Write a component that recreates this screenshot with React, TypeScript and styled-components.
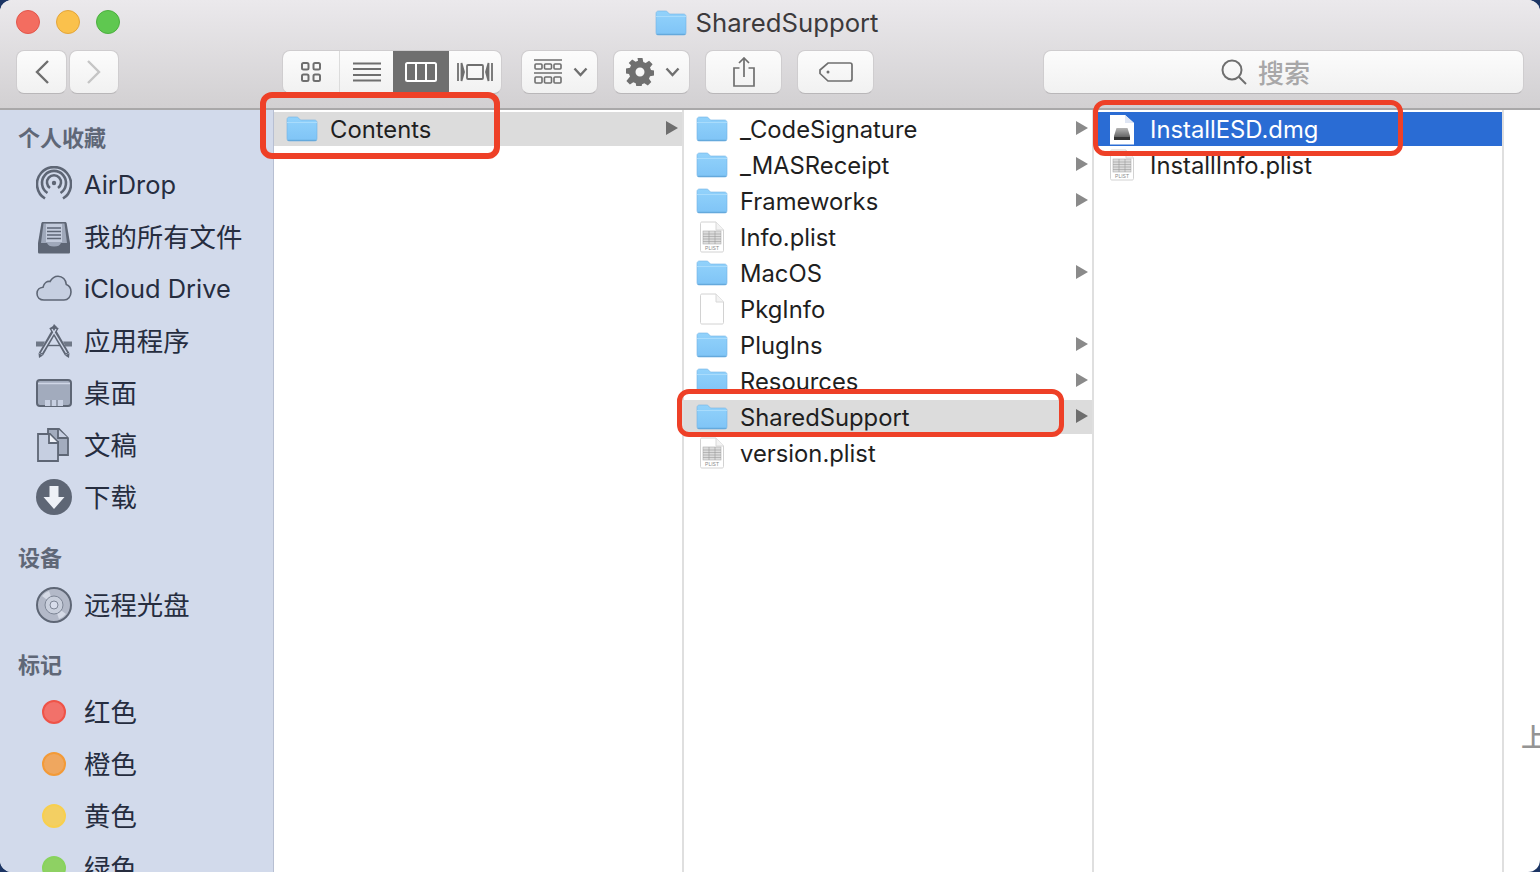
import React from 'react';
import styled, { createGlobalStyle } from 'styled-components';

const Global = createGlobalStyle`
  html, body { margin: 0; padding: 0; background: #1c3564; overflow: hidden; }
  body { font-family: Inter, "Noto Sans CJK SC", sans-serif; }
`;

const Win = styled.div`
  position: relative;
  width: 1540px;
  height: 872px;
  border-radius: 12px;
  overflow: hidden;
  display: flex;
  flex-direction: column;
  background: #fff;
`;
const Header = styled.header`
  height: 108px;
  flex: none;
  background: linear-gradient(#ebe9ec, #d2d0d2);
  border-bottom: 2px solid #a9a8a9;
  display: flex;
  flex-direction: column;
`;
const TitleBar = styled.div`
  height: 50px;
  flex: none;
  display: flex;
  align-items: center;
  padding-left: 16px;
`;
const Lights = styled.div`
  display: flex;
  gap: 16px;
  margin-top: -6px;
`;
const Light = styled.span<{ $c: string; $b: string }>`
  width: 24px;
  height: 24px;
  box-sizing: border-box;
  border-radius: 50%;
  background: ${p => p.$c};
  border: 1px solid ${p => p.$b};
`;
const Title = styled.div`
  flex: 1;
  display: flex;
  justify-content: center;
  align-items: center;
  gap: 8px;
  margin-top: -5px;
  padding-right: 126px;
  font-size: 25.7px;
  color: #3c3a3c;
`;
const Toolbar = styled.div`
  display: flex;
  align-items: flex-start;
  padding-left: 16px;
`;
const Btn = styled.div<{ $w: number; $ml?: number }>`
  width: ${p => p.$w}px;
  height: 44px;
  margin-left: ${p => p.$ml ?? 0}px;
  flex: none;
  box-sizing: border-box;
  display: flex;
  align-items: center;
  justify-content: center;
  gap: 11px;
  background: linear-gradient(#fcfcfc, #f1f1f1);
  border: 1px solid #cfcdcf;
  border-bottom-color: #b9b7b9;
  border-radius: 8px;
`;
const MenuBtn = styled(Btn)`
  padding-left: 2px;
`;
const Seg = styled.div`
  margin-left: 163px;
  width: 220px;
  height: 44px;
  flex: none;
  display: flex;
  box-sizing: border-box;
  background: linear-gradient(#fcfcfc, #f1f1f1);
  border: 1px solid #cfcdcf;
  border-bottom-color: #b9b7b9;
  border-radius: 8px;
  overflow: hidden;
`;
const SegItem = styled.div<{ $w: number; $on?: boolean; $line?: boolean }>`
  width: ${p => p.$w}px;
  flex: none;
  box-sizing: border-box;
  display: flex;
  align-items: center;
  justify-content: center;
  background: ${p => (p.$on ? '#6f6f6f' : 'transparent')};
  border-right: ${p => (p.$line ? '1px solid #dcdcdc' : 'none')};
  margin-top: ${p => (p.$on ? '-1px' : '0')};
  margin-bottom: ${p => (p.$on ? '-1px' : '0')};
`;
const Search = styled(Btn)`
  padding-right: 36px;
  font-size: 26px;
  font-weight: 500;
  color: #a8a7a8;
`;
const SearchLabel = styled.span`
  font-family: "Noto Sans CJK SC", sans-serif;
  line-height: 1;
`;
const Body = styled.div`
  flex: 1;
  display: flex;
  min-height: 0;
`;
const Side = styled.aside`
  width: 274px;
  flex: none;
  box-sizing: border-box;
  background: #d2daeb;
  border-right: 1px solid #b7bfd2;
  padding-top: 7px;
  overflow: hidden;
`;
const Heading = styled.div`
  height: 42px;
  line-height: 38px;
  padding-left: 18px;
  font-family: "Noto Sans CJK SC", sans-serif;
  font-size: 22px;
  font-weight: 700;
  color: #5f6777;
`;
const Group = styled.div<{ $gap: number }>`
  margin-bottom: ${p => p.$gap}px;
`;
const SideRow = styled.div`
  height: 52px;
  display: flex;
  align-items: center;
  font-size: 25.4px;
  color: #262d3f;
`;
const LatinLabel = styled.span`
  margin-top: -2px;
`;
const CjkLabel = styled.span`
  font-family: "Noto Sans CJK SC", sans-serif;
  font-size: 26.4px;
  line-height: 1;
  margin-top: -1px;
`;
const SideIcon = styled.span<{ $up?: number }>`
  width: 84px;
  padding-left: 36px;
  box-sizing: border-box;
  flex: none;
  display: flex;
  align-items: center;
  margin-top: ${p => -(p.$up ?? 0)}px;
`;
const TagDot = styled.span<{ $c: string; $b: string }>`
  width: 24px;
  height: 24px;
  margin-left: 6px;
  box-sizing: border-box;
  border-radius: 50%;
  background: ${p => p.$c};
  border: 2px solid ${p => p.$b};
`;
const Col = styled.section`
  width: 410px;
  flex: none;
  box-sizing: border-box;
  border-right: 2px solid #dfdfdf;
  padding-top: 1px;
`;
const LastCol = styled.section`
  flex: 1;
  position: relative;
`;
const Row = styled.div<{ $state?: 'grey' | 'blue' }>`
  height: 36px;
  box-sizing: border-box;
  padding-top: 1px;
  display: flex;
  align-items: center;
  font-size: 23.8px;
  white-space: nowrap;
  color: ${p => (p.$state === 'blue' ? '#fff' : '#1f1f1f')};
  background: ${p =>
    p.$state === 'blue' ? '#2a6cd4' : p.$state === 'grey' ? '#dcdcdc' : 'transparent'};
  background-clip: padding-box;
  border-top: 1px solid ${p => (p.$state ? '#fff' : 'transparent')};
  border-bottom: 1px solid ${p => (p.$state ? '#fff' : 'transparent')};
`;
const RowIcon = styled.span`
  width: 56px;
  flex: none;
  display: flex;
  justify-content: center;
  margin-top: -1px;
`;
const Name = styled.span`
  flex: 1;
`;
const Arrow = styled.span<{ $dark?: boolean }>`
  width: 0;
  height: 0;
  margin-right: 4px;
  border-left: 12px solid ${p => (p.$dark ? '#6e6e6e' : '#8a8a8a')};
  border-top: 7px solid transparent;
  border-bottom: 7px solid transparent;
  margin-top: -3px;
`;
const Mark = styled.div<{ $x: number; $y: number; $w: number; $h: number; $b: number }>`
  position: absolute;
  left: ${p => p.$x}px;
  top: ${p => p.$y}px;
  width: ${p => p.$w}px;
  height: ${p => p.$h}px;
  box-sizing: border-box;
  border: ${p => p.$b}px solid #ee4027;
  border-radius: 12px;
`;
const Stray = styled.span`
  position: absolute;
  left: 17px;
  top: 607px;
  font-size: 26px;
  font-weight: 500;
  color: #949494;
  font-family: "Noto Sans CJK SC", sans-serif;
`;

const Folder = () => (
  <svg width="32" height="26" viewBox="0 0 32 26">
    <defs>
      <linearGradient id="fg" x1="0" y1="0" x2="0" y2="1">
        <stop offset="0" stopColor="#92d2fb" />
        <stop offset="1" stopColor="#7fc4f6" />
      </linearGradient>
    </defs>
    <path d="M1 3.5C1 2 2 1 3.5 1h7c1 0 1.600.4 2.300 1.200L14.500 4H28.500C30 4 31 5 31 6.500v16c0 1.500-1 2.500-2.500 2.500h-25C2 25 1 24 1 22.500z" fill="url(#fg)" stroke="#74b4e4" strokeWidth=".6" />
    <path d="M1 6.500h30" stroke="#a9dcfc" strokeWidth="1" />
    <path d="M1.500 24.300h29" stroke="#5fa4d8" strokeWidth="1" />
  </svg>
);
const Doc = ({ children }: { children?: React.ReactNode }) => (
  <svg width="26" height="32" viewBox="0 0 26 32">
    <path d="M1.500 2.500C1.500 1.500 2 1 3 1h14l7.500 8v20.500c0 1-.5 1.500-1.500 1.500H3c-1 0-1.500-.5-1.500-1.500z" fill="#fff" stroke="#d2d2d2" />
    <path d="M17 1v8h7.500" fill="#f3f3f3" stroke="#d8d8d8" />
    {children}
  </svg>
);
const Plist = () => (
  <Doc>
    <rect x="4" y="10" width="18" height="13" fill="#dcdcdc" stroke="#adadad" strokeWidth=".6" />
    <path d="M4 13h18M4 15.500h18M4 18h18M4 20.500h18M10 10v13M16 10v13" stroke="#9c9c9c" strokeWidth=".6" />
    <text x="13" y="29" fontSize="5" textAnchor="middle" fill="#8a8a8a" fontFamily="Liberation Sans">PLIST</text>
  </Doc>
);
const Dmg = () => (
  <svg width="24" height="31" viewBox="0 0 24 31">
    <defs>
      <linearGradient id="dg" x1="0" y1="0" x2="0" y2="1">
        <stop offset="0" stopColor="#b5b5b5" />
        <stop offset="1" stopColor="#4a4a4a" />
      </linearGradient>
    </defs>
    <path d="M0 1h15l9 8v21.500H0z" fill="#fff" />
    <path d="M15 1v8h9" fill="#dfe6f4" />
    <path d="M6.500 14h11l2.500 8v4H4v-4z" fill="url(#dg)" />
    <rect x="4" y="23" width="16" height="3" fill="#333" />
  </svg>
);
const Ic = styled.svg<{ $c?: string }>`
  display: block;
  flex: none;
  fill: none;
  stroke: ${p => p.$c ?? '#6f6f6f'};
`;
const Chevron = () => (
  <Ic width="15" height="10" viewBox="0 0 15 10" strokeWidth="2.400"><path d="M1.500 1.500 7.500 8l6-6.500" /></Ic>
);
const S = '#5e6675';

const AirDrop = () => (
  <svg width="36" height="36" viewBox="0 0 36 36" fill="none" stroke={S} strokeWidth="2.600">
    <path d="M9 32.500A17 17 0 1 1 27 32.500" />
    <path d="M11.500 27A12 12 0 1 1 24.500 27" />
    <path d="M14 22A7 7 0 1 1 22 22" />
    <circle cx="18" cy="17" r="2.200" fill={S} stroke="none" />
  </svg>
);
const Docs = () => (
  <svg width="36" height="33" viewBox="0 0 36 33">
    <path d="M7 1h22c1 0 1.500.5 1.700 1.500L34 22v9c0 1-.5 1.500-1.500 1.500h-29C2.500 32.500 2 32 2 31v-9L5.300 2.500C5.500 1.500 6 1 7 1z" fill={S} />
    <path d="M7.500 2.500h21L31 22h-6c-1 2.500-3 3.500-7 3.500s-6-1-7-3.500H5z" fill="#9fa8ba" />
    <path d="M10 3h16v18H10z" fill="#c3cbdc" />
    <path d="M11 7h14M11 10.500h14M11 14h14M11 17.500h14" stroke={S} strokeWidth="1.500" />
  </svg>
);
const Cloud = () => (
  <svg width="36" height="26" viewBox="0 0 36 26">
    <path d="M8 25C3.500 25 1 22 1 18.500c0-3.500 2.500-6 6-6.300C8 8 11 6 14 6.500 16 3 19 1.200 22 1.200c4.500 0 8 3.300 8.300 8.300 3 1 4.700 4 4.700 7.500 0 4.500-3 8-7 8z" fill="#c6cfe1" stroke={S} strokeWidth="1.600" />
  </svg>
);
const Apps = () => (
  <svg width="36" height="34" viewBox="0 0 36 34" fill="none">
    <path d="M0 17.500h9l-2.500 5H0zM36 17.500h-9l2.500 5H36z" fill={S} opacity=".85" />
    <path d="M9 21.500h18" stroke={S} strokeWidth="1.400" />
    <path d="M20.500 3 5 30" stroke={S} strokeWidth="5" />
    <path d="M15.500 3 31 30" stroke={S} strokeWidth="5" />
    <path d="M20 5 5.500 29" stroke="#d2daeb" strokeWidth="1.400" />
    <path d="M16 5 30.500 29" stroke="#d2daeb" strokeWidth="1.400" />
    <path d="M18 0l3 3-5 1zM3 34l-.5-5 4.500 2.500zM33 34l.5-5-4.500 2.500z" fill={S} />
  </svg>
);
const Desk = () => (
  <svg width="36" height="28" viewBox="0 0 36 28">
    <rect x="1" y="1" width="34" height="26" rx="3" fill="#a2abbd" stroke={S} strokeWidth="2" />
    <path d="M2 4.500h32" stroke="#cfd6e6" strokeWidth="1.500" />
    <path d="M9 27v-6h18v6z" fill="#c8d0e2" />
    <path d="M15 21v6M21 21v6" stroke={S} strokeWidth="1" />
  </svg>
);
const Papers = () => (
  <svg width="34" height="34" viewBox="0 0 34 34" fill="#a3acbe" stroke={S} strokeWidth="1.800">
    <path d="M12 1h11l9 9v17H22V14H12z" />
    <path d="M22 1v9h10" fill="#c8d0e2" />
    <path d="M2 6h12l8 8v19H2z" fill="#c6cfe1" />
    <path d="M13 6v9h9" fill="#eef1f7" />
  </svg>
);
const Down = () => (
  <svg width="36" height="36" viewBox="0 0 36 36">
    <circle cx="18" cy="18" r="18" fill={S} />
    <path d="M13.500 7h9v11h6L18 30 7.500 18h6z" fill="#eef1f7" />
  </svg>
);
const Disc = () => (
  <svg width="36" height="36" viewBox="0 0 36 36" fill="none">
    <circle cx="18" cy="18" r="17" fill="#b3b9c8" stroke={S} strokeWidth="2" />
    <path d="M18 18 6 9A15 15 0 0 1 13 4zM18 18l12 9a15 15 0 0 1-7 5z" fill="#d5dae6" />
    <circle cx="18" cy="18" r="9" fill="#c9cfdc" stroke="#7e8696" />
    <circle cx="18" cy="18" r="4" fill="#d8ddeb" stroke="#7e8696" />
  </svg>
);

const col2: [string, 'f' | 'p' | 'd', 'grey'?][] = [
  ['_CodeSignature', 'f'],
  ['_MASReceipt', 'f'],
  ['Frameworks', 'f'],
  ['Info.plist', 'p'],
  ['MacOS', 'f'],
  ['PkgInfo', 'd'],
  ['PlugIns', 'f'],
  ['Resources', 'f'],
  ['SharedSupport', 'f', 'grey'],
  ['version.plist', 'p'],
];

export default function App() {
  return (
    <Win>
      <Global />
      <Header>
        <TitleBar>
          <Lights>
            <Light $c="#f36d60" $b="#e2564b" />
            <Light $c="#fac14c" $b="#e3a53a" />
            <Light $c="#5fc850" $b="#4caf3f" />
          </Lights>
          <Title>
            <Folder />
            SharedSupport
          </Title>
        </TitleBar>
        <Toolbar>
          <Btn $w={51}>
            <Ic width="16" height="26" viewBox="0 0 16 26" strokeWidth="2.400"><path d="M14 2 3 13l11 11" /></Ic>
          </Btn>
          <Btn $w={50} $ml={2}>
            <Ic $c="#c5c5c5" width="16" height="26" viewBox="0 0 16 26" strokeWidth="2.400"><path d="M2 2l11 11L2 24" /></Ic>
          </Btn>
          <Seg>
            <SegItem $w={57} $line>
              <Ic width="20" height="20" viewBox="0 0 20 20" strokeWidth="2"><rect x="1" y="1" width="6.500" height="6.500" rx="1.500" /><rect x="12.500" y="1" width="6.500" height="6.500" rx="1.500" /><rect x="1" y="12.500" width="6.500" height="6.500" rx="1.500" /><rect x="12.500" y="12.500" width="6.500" height="6.500" rx="1.500" /></Ic>
            </SegItem>
            <SegItem $w={53}>
              <Ic width="28" height="20" viewBox="0 0 28 20" strokeWidth="1.800"><path d="M0 1.500h28M0 7h28M0 13h28M0 18.500h28" /></Ic>
            </SegItem>
            <SegItem $w={56} $on>
              <Ic $c="#fff" width="32" height="20" viewBox="0 0 32 20" strokeWidth="2"><rect x="1" y="1" width="30" height="18" rx="1.500" /><path d="M11 1v18M21 1v18" /></Ic>
            </SegItem>
            <SegItem $w={52}>
              <Ic width="36" height="20" viewBox="0 0 36 20" strokeWidth="1.800"><rect x="10" y="3" width="16" height="14" rx="1" /><path d="M1 1v18M35 1v18" /><path d="M4.500 1v18l2.500-9zM31.500 1v18L29 10z" fill="#6f6f6f" /></Ic>
            </SegItem>
          </Seg>
          <MenuBtn $w={77} $ml={19}>
            <Ic width="28" height="26" viewBox="0 0 28 26" strokeWidth="1.600"><path d="M0 1h28M0 14h28" /><rect x="1" y="5" width="7" height="5" rx="1" /><rect x="10.500" y="5" width="7" height="5" rx="1" /><rect x="20" y="5" width="7" height="5" rx="1" /><rect x="1" y="18" width="7" height="6" rx="1" /><rect x="10.500" y="18" width="7" height="6" rx="1" /><rect x="20" y="18" width="7" height="6" rx="1" /></Ic>
            <Chevron />
          </MenuBtn>
          <MenuBtn $w={77} $ml={15}>
            <svg width="28" height="28" viewBox="0 0 28 28" fill="#6f6f6f">
              <path fillRule="evenodd" d="M11.500 0h5l.8 4 2.400 1 3.400-2.300 3.500 3.500L24 9.600l1 2.400 3 .5v5l-4 .8-1 2.400 2.300 3.400-3.500 3.500-3.400-2.300-2.400 1-.5 3h-5l-.8-4-2.400-1-3.400 2.300-3.500-3.500L4 18.400 3 16l-3-.5v-5l4-.8 1-2.400L2.700 4.900l3.500-3.500L9.600 3.700 12 2.700zM14 9.500a4.500 4.500 0 1 0 0 9 4.500 4.500 0 0 0 0-9z" />
            </svg>
            <Chevron />
          </MenuBtn>
          <Btn $w={77} $ml={15}>
            <Ic width="22" height="30" viewBox="0 0 22 30" strokeWidth="1.700"><path d="M6.500 11H1v18h20V11h-5.500M11 20V1M6 6l5-5 5 5" /></Ic>
          </Btn>
          <Btn $w={77} $ml={15}>
            <Ic width="34" height="20" viewBox="0 0 34 20" strokeWidth="1.700"><path d="M9 1h22c1.200 0 2 .8 2 2v14c0 1.200-.8 2-2 2H9l-8-7.500V8z" /><circle cx="9" cy="10" r="1.500" fill="#6f6f6f" stroke="none" /></Ic>
          </Btn>
          <Search $w={481} $ml={169}>
            <Ic width="26" height="26" viewBox="0 0 26 26" strokeWidth="2"><circle cx="11" cy="11" r="9.500" /><path d="M18 18l7 7" /></Ic>
            <SearchLabel>搜索</SearchLabel>
          </Search>
        </Toolbar>
      </Header>
      <Body>
        <Side>
          <Heading>个人收藏</Heading>
          <Group $gap={14}>
            <SideRow><SideIcon $up={2}><AirDrop /></SideIcon><LatinLabel>AirDrop</LatinLabel></SideRow>
            <SideRow><SideIcon><Docs /></SideIcon><CjkLabel>我的所有文件</CjkLabel></SideRow>
            <SideRow><SideIcon $up={2}><Cloud /></SideIcon><LatinLabel>iCloud Drive</LatinLabel></SideRow>
            <SideRow><SideIcon><Apps /></SideIcon><CjkLabel>应用程序</CjkLabel></SideRow>
            <SideRow><SideIcon><Desk /></SideIcon><CjkLabel>桌面</CjkLabel></SideRow>
            <SideRow><SideIcon><Papers /></SideIcon><CjkLabel>文稿</CjkLabel></SideRow>
            <SideRow><SideIcon><Down /></SideIcon><CjkLabel>下载</CjkLabel></SideRow>
          </Group>
          <Heading>设备</Heading>
          <Group $gap={13}>
            <SideRow><SideIcon><Disc /></SideIcon><CjkLabel>远程光盘</CjkLabel></SideRow>
          </Group>
          <Heading>标记</Heading>
          <SideRow><SideIcon><TagDot $c="#f2716a" $b="#ef5347" /></SideIcon><CjkLabel>红色</CjkLabel></SideRow>
          <SideRow><SideIcon><TagDot $c="#efa75f" $b="#f39a37" /></SideIcon><CjkLabel>橙色</CjkLabel></SideRow>
          <SideRow><SideIcon><TagDot $c="#f3cf62" $b="#f8cf4e" /></SideIcon><CjkLabel>黄色</CjkLabel></SideRow>
          <SideRow><SideIcon><TagDot $c="#8ed163" $b="#88d35c" /></SideIcon><CjkLabel>绿色</CjkLabel></SideRow>
        </Side>
        <Col>
          <Row $state="grey">
            <RowIcon><Folder /></RowIcon>
            <Name>Contents</Name>
            <Arrow $dark />
          </Row>
        </Col>
        <Col>
          {col2.map(([n, k, st]) => (
            <Row key={n} $state={st}>
              <RowIcon>{k === 'f' ? <Folder /> : k === 'p' ? <Plist /> : <Doc />}</RowIcon>
              <Name>{n}</Name>
              {k === 'f' && <Arrow $dark={!!st} />}
            </Row>
          ))}
        </Col>
        <Col>
          <Row $state="blue">
            <RowIcon><Dmg /></RowIcon>
            <Name>InstallESD.dmg</Name>
          </Row>
          <Row>
            <RowIcon><Plist /></RowIcon>
            <Name>InstallInfo.plist</Name>
          </Row>
        </Col>
        <LastCol>
          <Stray>上</Stray>
        </LastCol>
      </Body>
      <Mark $x={260} $y={92} $w={240} $h={67} $b={6} />
      <Mark $x={677} $y={389} $w={387} $h={48} $b={5} />
      <Mark $x={1093} $y={100} $w={310} $h={56} $b={5} />
    </Win>
  );
}
